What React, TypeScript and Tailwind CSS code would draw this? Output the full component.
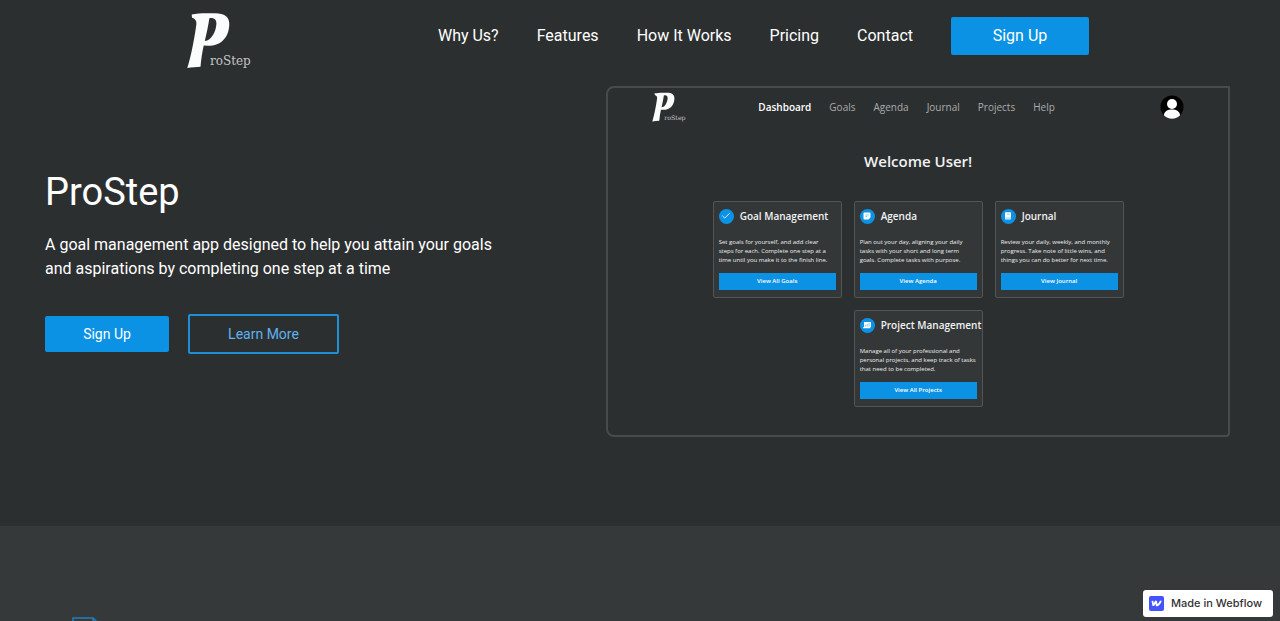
import React from 'react';
import { Check } from 'lucide-react';

const navLinks = [
  { label: 'Why Us?', href: '#why-us' },
  { label: 'Features', href: '#features' },
  { label: 'How It Works', href: '#how-it-works' },
  { label: 'Pricing', href: '#pricing' },
  { label: 'Contact', href: '#contact' },
];

const appLinks = ['Dashboard', 'Goals', 'Agenda', 'Journal', 'Projects', 'Help'];

const NoteIcon = () => (
  <svg viewBox="0 0 14 14" className="size-[14px]" fill="#fff">
    <path d="M4.5 3.500h5a1 1 0 0 1 1 1v4l-2 2h-4a1 1 0 0 1-1-1v-5a1 1 0 0 1 1-1z" />
    <path d="M5.400 6h3.200M5.400 7.600h1.800" stroke="#0c92e4" strokeWidth="0.5" />
  </svg>
);

const BookIcon = () => (
  <svg viewBox="0 0 14 14" className="size-[14px]" fill="#fff">
    <rect x="4" y="3.2" width="6" height="7.4" rx="0.8" />
    <path d="M5.800 5.200h3M4.600 9.100h5.400" stroke="#0c92e4" strokeWidth="0.5" />
  </svg>
);

const BoardIcon = () => (
  <svg viewBox="0 0 14 14" className="size-[14px]" fill="#fff">
    <path d="M4 4h7v5.200h-.8v1H3.200V9h.8z" />
    <path d="M5.400 8.600V6.800M7.200 8.600V6M9 8.600V5.200" stroke="#0c92e4" strokeWidth="0.5" />
  </svg>
);

const cards = [
  {
    title: 'Goal Management',
    text: ['Set goals for yourself, and add clear', 'steps for each. Complete one step at a', 'time until you make it to the finish line.'],
    action: 'View All Goals',
    icon: <Check size={10} strokeWidth={2} className="text-white" />,
  },
  {
    title: 'Agenda',
    text: ['Plan out your day, aligning your daily', 'tasks with your short and long term', 'goals. Complete tasks with purpose.'],
    action: 'View Agenda',
    icon: <NoteIcon />,
  },
  {
    title: 'Journal',
    text: ['Review your daily, weekly, and monthly', 'progress. Take note of little wins, and', 'things you can do better for next time.'],
    action: 'View Journal',
    icon: <BookIcon />,
  },
  {
    title: 'Project Management',
    text: ['Manage all of your professional and', 'personal projects, and keep track of tasks', 'that need to be completed.'],
    action: 'View All Projects',
    icon: <BoardIcon />,
  },
];

const Logo: React.FC<{ className: string }> = ({ className }) => (
  <svg viewBox="0 0 64 57" className={className} role="img" aria-label="ProStep">
    <path
      fill="#fbfcfc"
      fillRule="evenodd"
      d="M4.700 2.600C9 1.500 14 1.200 20 1.200h8c9.500 0 14.500 3.600 14.300 11C42 25 34.500 33.800 21 33.800l-4.300-.3c-1.500 7-2.600 14-3.200 21.300-4 .3-8.900.5-13.200 1.200C4 45 7.700 25 9.400 12 9.800 8.700 8 6.500 5 5.700zM22.400 6.200c-1.200 7.800-2.800 15-4.600 22.900 6.800-.6 11.200-9.500 11.600-17.300.2-4.200-2.300-6.300-7-5.600z"
    />
    <text x="23" y="53" fontSize="12" fill="#c3c6c6" fontFamily="'DejaVu Serif', serif">
      roStep
    </text>
  </svg>
);

const AppPreview = () => (
  <div className="rounded-l-lg rounded-br-sm border-2 border-[#484b4c] bg-[#2c2f30] pb-[28px] font-['Open_Sans','Noto_Sans',sans-serif]">
    <div className="flex items-center px-[44px] pt-1">
      <Logo className="h-[30px] w-[34px]" />
      <nav className="ml-[72px] flex gap-[18px] text-[10px] leading-[14px] text-[#a9acad]">
        {appLinks.map((link, i) => (
          <a key={link} href="#" className={i === 0 ? 'font-semibold text-white' : ''}>
            {link}
          </a>
        ))}
      </nav>
      <svg viewBox="0 0 24 24" className="ml-auto size-6">
        <circle cx="12" cy="12" r="11.5" fill="#000" />
        <circle cx="12" cy="9" r="5" fill="#fff" />
        <path d="M3.900 20.200c.6-4 3.600-5.700 8.100-5.700s7.500 1.700 8.100 5.700c-2 2.300-4.800 3.500-8.100 3.500s-6.100-1.200-8.100-3.500z" fill="#fff" />
      </svg>
    </div>

    <h2 className="mt-[27px] text-center text-[15px] leading-6 font-semibold text-[#f1f2f2]">Welcome User!</h2>

    {/* Feature cards, last one wraps to its own row */}
    <div className="mx-auto mt-[28px] flex max-w-[411px] flex-wrap justify-center gap-3">
      {cards.map((card) => (
        <div key={card.title} className="w-[129px] rounded-xs border border-[#525556] bg-[#343738] px-[5px] pt-[6px] pb-[7px]">
          <div className="flex items-center gap-[6px]">
            <span className="flex size-[15px] shrink-0 items-center justify-center rounded-full bg-[#0c92e4]">{card.icon}</span>
            <h3 className="text-[10px] leading-4 font-semibold whitespace-nowrap text-[#f1f2f2]">{card.title}</h3>
          </div>
          <p className="mt-[14px] text-[6px] leading-[9px] whitespace-nowrap text-[#eceeee]">
            {card.text.map((line) => (
              <span key={line} className="block">
                {line}
              </span>
            ))}
          </p>
          <button type="button" className="mt-2 block h-[17px] w-full bg-[#0c92e4] text-[6px] leading-[9px] font-semibold text-white">
            {card.action}
          </button>
        </div>
      ))}
    </div>
  </div>
);

const App: React.FC = () => {
  return (
    <div className="flex h-screen flex-col overflow-hidden bg-[#2c2f30] font-[Roboto,sans-serif] text-white">
      {/* Navbar */}
      <header className="mx-auto flex w-full max-w-[940px] items-start justify-between pr-[21px] pl-[17px]">
        <a href="#" className="mt-3">
          <Logo className="h-[57px] w-16" />
        </a>
        <nav className="mt-[17px] flex items-center gap-[38px] text-base">
          {navLinks.map((link) => (
            <a key={link.label} href={link.href}>
              {link.label}
            </a>
          ))}
          <a href="#sign-up" className="flex h-[38px] w-[138px] items-center justify-center rounded-xs bg-[#0c92e4]">
            Sign Up
          </a>
        </nav>
      </header>

      {/* Hero */}
      <section className="grid shrink-0 grid-cols-[9fr_10fr] items-center pt-[17px] pr-[50px] pb-[89px] pl-[45px]">
        <div>
          <h1 className="text-[38px] leading-[44px]">ProStep</h1>
          <p className="mt-[19px] max-w-[470px] text-base leading-6">
            A goal management app designed to help you attain your goals and aspirations by completing one step at a time
          </p>
          <div className="mt-[33px] flex items-center gap-[19px] text-sm">
            <button type="button" className="h-9 w-[124px] rounded-xs bg-[#0c92e4]">
              Sign Up
            </button>
            <button type="button" className="h-10 w-[151px] rounded-xs border-2 border-[#1f8fd6] text-[#5fb2ee]">
              Learn More
            </button>
          </div>
        </div>
        <AppPreview />
      </section>

      {/* Why us */}
      <section id="why-us" className="min-h-0 grow overflow-hidden bg-[#363939] px-[72px] pt-[91px]">
        <svg viewBox="0 0 28 36" className="h-9 w-7" fill="none" stroke="#1f7fbd" strokeWidth="1.5">
          <path d="M1 35V1h20l6 6v28zM21 1v6h6" />
        </svg>
      </section>

      <a
        href="#webflow"
        className="fixed right-[7px] bottom-1 flex h-[27px] w-[130px] items-center gap-[7px] rounded-[3px] bg-white pl-[6px] font-[Inter,sans-serif] text-[11px] font-medium whitespace-nowrap text-[#333]"
      >
        <svg viewBox="0 0 15 15" className="size-[15px] shrink-0">
          <rect width="15" height="15" rx="2" fill="#4353ff" />
          <path
            fill="none"
            stroke="#fff"
            strokeWidth="1.8"
            strokeLinejoin="bevel"
            d="M3.400 4.900l.9 4.700 2.800-4.500.6 4.500c2-.6 3.300-2.200 4.200-4.800"
          />
        </svg>
        Made in Webflow
      </a>
    </div>
  );
};

export default App;
